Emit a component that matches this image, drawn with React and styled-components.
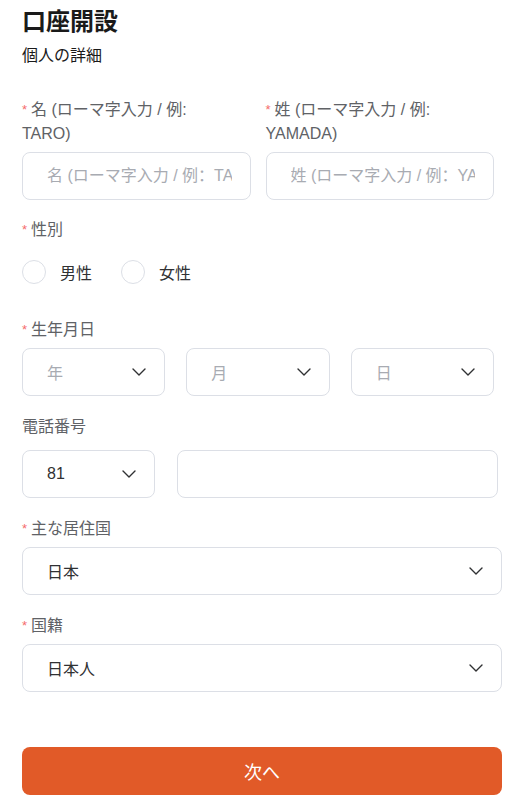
import React from "react";
import styled, { createGlobalStyle } from "styled-components";

const GlobalStyle = createGlobalStyle`
  * { box-sizing: border-box; }
  body {
    margin: 0;
    background: #ffffff;
    font-family: "Liberation Sans", "Noto Sans CJK JP", sans-serif;
    color: #303133;
  }
`;

const Page = styled.div`
  padding: 6px 10px 16px 22px;
  width: 512px;
`;

const Title = styled.h1`
  margin: 0;
  font-size: 24px;
  line-height: 32px;
  font-weight: 700;
  color: #1a1a1a;
`;

const Subtitle = styled.p`
  margin: 6px 0 0;
  font-size: 16px;
  line-height: 24px;
  color: #1a1a1a;
`;

const Form = styled.form`
  margin-top: 30px;
  display: flex;
  flex-direction: column;
`;

const Field = styled.div`
  display: flex;
  flex-direction: column;
  margin-bottom: ${(p) => p.$gap ?? 19}px;
  min-width: 0;
`;

const Label = styled.label`
  font-size: 16px;
  line-height: 24px;
  color: #606266;
  margin-bottom: ${(p) => p.$gap ?? 6}px;
  padding-right: ${(p) => p.$pr ?? 0}px;
`;

const Star = styled.span`
  color: #f56c6c;
  font-size: 13px;
  margin-right: 4px;
  vertical-align: 1px;
`;

const Grid = styled.div`
  display: grid;
  grid-template-columns: ${(p) => p.$cols};
  column-gap: ${(p) => p.$gap}px;
  width: ${(p) => p.$width}px;
`;

const TextInput = styled.input`
  width: 100%;
  height: 48px;
  border: 1px solid #dcdfe6;
  border-radius: 8px;
  padding: 0 18px 0 24px;
  font-family: "Liberation Sans", "Noto Sans CJK SC", sans-serif;
  font-size: 16px;
  color: #303133;
  outline: none;
  &::placeholder {
    color: #a8abb2;
  }
`;

const SelectBox = styled.div`
  height: 48px;
  border: 1px solid #dcdfe6;
  border-radius: 8px;
  padding: 0 18px 0 24px;
  display: flex;
  align-items: center;
  justify-content: space-between;
  font-size: 16px;
  color: ${(p) => (p.$placeholder ? "#a8abb2" : "#303133")};
`;

const RadioRow = styled.div`
  display: flex;
  align-items: center;
  height: 48px;
  gap: 29px;
  margin-bottom: 4px;
`;

const RadioOption = styled.label`
  display: flex;
  align-items: center;
  gap: 14px;
  font-size: 16px;
  color: #303133;
`;

const RadioCircle = styled.span`
  width: 24px;
  height: 24px;
  border-radius: 50%;
  border: 1px solid #dcdfe6;
  background: #fff;
`;

const SubmitButton = styled.button`
  margin-top: 55px;
  width: 480px;
  height: 48px;
  border: none;
  border-radius: 8px;
  background: #e15a28;
  color: #ffffff;
  font-family: inherit;
  font-size: 18px;
`;

const Chevron = () => (
  <svg width="14" height="8" viewBox="0 0 14 8" fill="none">
    <polyline points="1,1 7,7 13,1" stroke="#303133" strokeWidth="1.4" strokeLinecap="round" strokeLinejoin="round" />
  </svg>
);

const Select = ({ value, placeholder }) => (
  <SelectBox $placeholder={!value}>
    <span>{value || placeholder}</span>
    <Chevron />
  </SelectBox>
);

const Req = ({ children, gap, pr }) => (
  <Label $gap={gap} $pr={pr}>
    <Star>*</Star>
    {children}
  </Label>
);

export default function App() {
  return (
    <>
      <GlobalStyle />
      <Page>
        <Title>口座開設</Title>
        <Subtitle>個人の詳細</Subtitle>
        <Form onSubmit={(e) => e.preventDefault()}>
          <Grid $cols="1fr 1fr" $gap={15} $width={472}>
            <Field $gap={18}>
              <Req pr={24}>名 (ローマ字入力 / 例: TARO)</Req>
              <TextInput placeholder="名 (ローマ字入力 / 例：TARO)" />
            </Field>
            <Field $gap={18}>
              <Req pr={24}>姓 (ローマ字入力 / 例: YAMADA)</Req>
              <TextInput placeholder="姓 (ローマ字入力 / 例：YAMADA)" />
            </Field>
          </Grid>

          <Field $gap={18}>
            <Req>性別</Req>
            <RadioRow>
              <RadioOption>
                <RadioCircle />
                男性
              </RadioOption>
              <RadioOption>
                <RadioCircle />
                女性
              </RadioOption>
            </RadioRow>
          </Field>

          <Field>
            <Req>生年月日</Req>
            <Grid $cols="repeat(3, 1fr)" $gap={21} $width={472}>
              <Select placeholder="年" />
              <Select placeholder="月" />
              <Select placeholder="日" />
            </Grid>
          </Field>

          <Field>
            <Label $gap={11}>電話番号</Label>
            <Grid $cols="133px 1fr" $gap={22} $width={476}>
              <Select value="81" />
              <TextInput />
            </Grid>
          </Field>

          <Field>
            <Req>主な居住国</Req>
            <Select value="日本" />
          </Field>

          <Field $gap={0}>
            <Req>国籍</Req>
            <Select value="日本人" />
          </Field>

          <SubmitButton type="submit">次へ</SubmitButton>
        </Form>
      </Page>
    </>
  );
}
